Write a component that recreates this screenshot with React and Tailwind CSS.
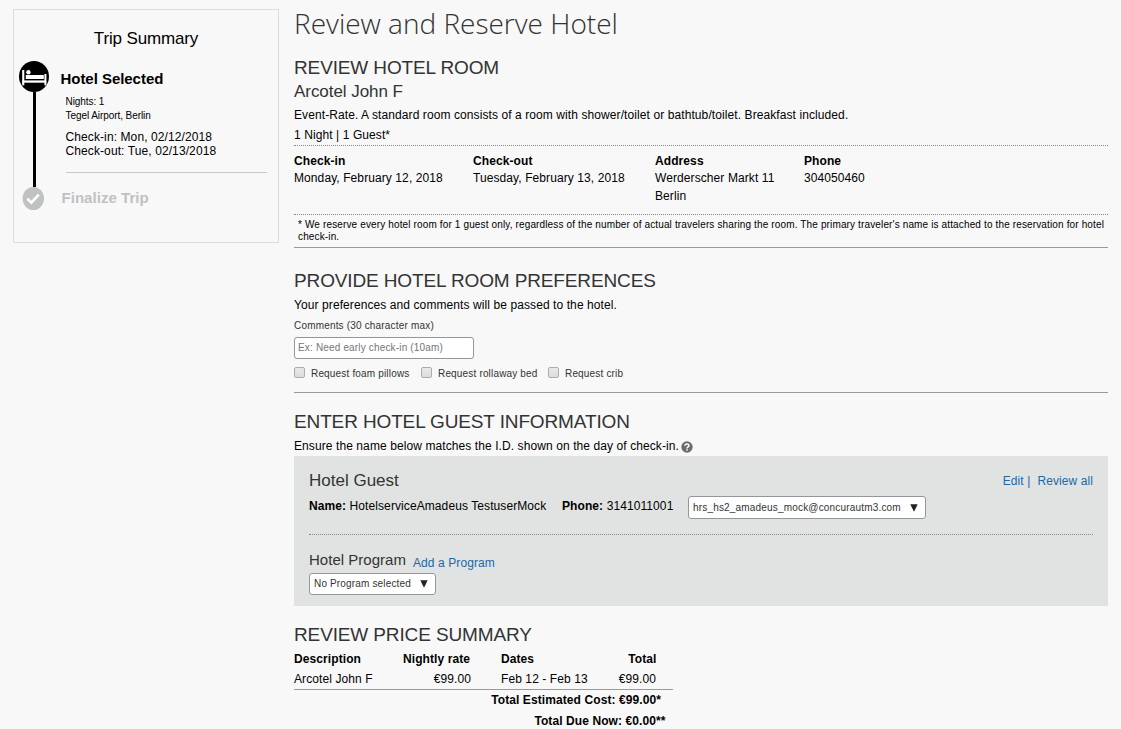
const h2 = "h-6 whitespace-nowrap text-[19px] leading-6 tracking-[-0.13px] text-[#333]";
const line = "h-[18px] whitespace-nowrap leading-[18px]";

function Select({ className, children }) {
  return (
    <div className={"flex items-center justify-between rounded-[3px] border border-[#94969b] bg-white pl-1 pr-[7px] " + className}>
      <span className="whitespace-nowrap text-[10px] leading-5 text-[#333]">{children}</span>
      <svg width="8" height="8" viewBox="0 0 8 8">
        <path d="M0.3 0.3h7.4L4 7.8z" fill="#222" />
      </svg>
    </div>
  );
}

function Check({ className = "", children }) {
  return (
    <label className={"flex items-start whitespace-nowrap text-[10px] leading-[14px] text-[#333] " + className}>
      <span className="size-[11px] shrink-0 rounded-[2px] border border-[#adadad] bg-linear-to-b from-[#e9e9e9] to-[#dcdcdc]" />
      <span className="pl-1.5">{children}</span>
    </label>
  );
}

function Field({ label, className, children }) {
  return (
    <div className={"shrink-0 " + className}>
      <div className="h-[17px] whitespace-nowrap font-bold leading-[18px]">{label}</div>
      <div className="whitespace-nowrap leading-[18px]">{children}</div>
    </div>
  );
}

function BedIcon() {
  return (
    <svg className="block shrink-0" width="30" height="31" viewBox="0 0 30 31">
      <ellipse cx="15" cy="15.5" rx="15" ry="15.5" fill="#000" />
      <g fill="#fff">
        <rect x="3.2" y="9" width="2.1" height="15.3" />
        <rect x="25.4" y="13" width="2" height="11.3" />
        <rect x="3.2" y="19.4" width="24" height="2.3" />
        <rect x="6.8" y="14" width="18" height="4" />
        <circle cx="9.4" cy="11.3" r="2.2" />
      </g>
    </svg>
  );
}

function TripSummary() {
  return (
    <aside className="ml-[13px] mt-[9px] h-[234px] w-[266px] shrink-0 border border-[#dcdcdc]">
      <div className="mt-[19px] text-center text-[17px] leading-[20px] tracking-[-0.15px]">Trip Summary</div>
      <div className="mt-[12px] flex">
        <div className="ml-[5px] flex w-[30px] shrink-0 flex-col items-center">
          <BedIcon />
          <div className="ml-px h-[95px] w-[3px] bg-black" />
          <svg className="mr-[2px] block" width="22" height="23" viewBox="0 0 22 23">
            <ellipse cx="11.3" cy="11.5" rx="10.7" ry="11.5" fill="#c0c1c2" />
            <path d="M5.4 11.8l4 3.9 7.4-8" fill="none" stroke="#fff" strokeWidth="2.6" />
          </svg>
        </div>
        <div className="ml-[11.5px]">
          <div className="mt-[8px] h-[20px] whitespace-nowrap text-[15px] font-bold leading-[20px] tracking-[-0.04px]">Hotel Selected</div>
          <div className="ml-[5px] mt-[6px] text-[10px] leading-[14px] tracking-[-0.07px]">
            <div>Nights: 1</div>
            <div>Tegel Airport, Berlin</div>
          </div>
          <div className="ml-[5px] mt-[7px] text-[12px] leading-[14px] tracking-[0.1px]">
            <div>Check-in: Mon, 02/12/2018</div>
            <div>Check-out: Tue, 02/13/2018</div>
          </div>
          <div className="ml-[5.5px] mt-[14px] h-px w-[201px] bg-[#c8c8c8]" />
          <div className="ml-px mt-[15px] text-[15px] font-bold leading-[20px] tracking-[0.04px] text-[#c0c1c2]">Finalize Trip</div>
        </div>
      </div>
    </aside>
  );
}

export default function App() {
  return (
    <div className="flex h-[729px] w-[1121px] overflow-hidden bg-[#f8f8f8] font-['Liberation_Sans',Arial,sans-serif] text-[12px] tracking-[0.09px] text-black">
      <TripSummary />
      <main className="ml-[15px] w-[814px] shrink-0">
        <h1 className="mt-[4px] h-[38px] whitespace-nowrap font-['Open_Sans',sans-serif] text-[28px] font-light leading-[38px] tracking-normal text-[#333]">
          Review and Reserve Hotel
        </h1>

        <section className="mt-[14px]">
          <h2 className={h2}>REVIEW HOTEL ROOM</h2>
          <div className="mt-[2px] h-[20px] text-[17px] leading-[20px] tracking-[-0.05px] text-[#333]">Arcotel John F</div>
          <div className={"mt-[4px] " + line}>
            Event-Rate. A standard room consists of a room with shower/toilet or bathtub/toilet. Breakfast included.
          </div>
          <div className={"mt-[2px] " + line}>1 Night | 1 Guest*</div>
          <div className="mt-px flex h-[70px] border-y border-dotted border-[#888] pt-[6px]">
            <Field label="Check-in" className="w-[179px]">Monday, February 12, 2018</Field>
            <Field label="Check-out" className="w-[182px]">Tuesday, February 13, 2018</Field>
            <Field label="Address" className="w-[149px]">Werderscher Markt 11<br />Berlin</Field>
            <Field label="Phone" className="w-[80px]">304050460</Field>
          </div>
          <div className="h-[33px] border-b border-[#999] pl-1 pt-[4px] text-[10px] leading-[12px] tracking-[0.139px]">
            <div className="whitespace-nowrap">
              * We reserve every hotel room for 1 guest only, regardless of the number of actual travelers sharing the room. The primary traveler's name is attached to the reservation for hotel
            </div>
            <div>check-in.</div>
          </div>
        </section>

        <section className="mt-[21px]">
          <h2 className={h2}>PROVIDE HOTEL ROOM PREFERENCES</h2>
          <div className={"mt-[3px] " + line}>Your preferences and comments will be passed to the hotel.</div>
          <div className="mt-[5px] h-[14px] text-[10px] leading-[14px] tracking-[0.18px] text-[#333]">Comments (30 character max)</div>
          <input
            className="mt-[4px] block h-[22px] w-[180px] rounded-[3px] border border-[#94969b] bg-white px-[3px] pb-px text-[10px] tracking-[0.165px] placeholder:text-[#757575]"
            placeholder="Ex: Need early check-in (10am)"
          />
          <div className="mt-[8px] flex h-[26px] border-b border-[#999] tracking-[0.17px]">
            <Check className="w-[127px]">Request foam pillows</Check>
            <Check className="w-[127px]">Request rollaway bed</Check>
            <Check>Request crib</Check>
          </div>
        </section>

        <section className="mt-[17px]">
          <h2 className={h2}>ENTER HOTEL GUEST INFORMATION</h2>
          <div className={"mt-[3px] flex items-center " + line}>
            Ensure the name below matches the I.D. shown on the day of check-in.
            <svg className="ml-[2px] mt-px" width="12" height="12" viewBox="0 0 12 12">
              <circle cx="6" cy="6" r="5.7" fill="#6c6c6c" />
              <path d="M4 4.8C4 2.4 8 2.4 8 4.6 8 5.9 6.1 5.9 6.1 7.4" fill="none" stroke="#fff" strokeWidth="1.5" />
              <rect x="5.3" y="8.2" width="1.5" height="1.5" fill="#fff" />
            </svg>
          </div>
          <div className="mt-px flow-root h-[150px] bg-[#e1e3e2] px-[15px]">
            <div className="mt-[15px] flex h-[20px] items-center justify-between">
              <div className="text-[17px] leading-[20px] tracking-normal text-[#333]">Hotel Guest</div>
              <div className="flex gap-[7px] text-[#2068a8]">
                <span>Edit |</span>
                <span>Review all</span>
              </div>
            </div>
            <div className="mt-[5px] flex h-[23px]">
              <div className="mt-px w-[253px] leading-[18px]"><b>Name:</b> HotelserviceAmadeus TestuserMock</div>
              <div className="mt-px w-[126px] leading-[18px]"><b>Phone:</b> 3141011001</div>
              <Select className="h-[23px] w-[238px] tracking-[0.18px]">hrs_hs2_amadeus_mock@concurautm3.com</Select>
            </div>
            <div className="mt-[15px] border-t border-dotted border-[#888]" />
            <div className="mt-[15px] flex h-[20px] items-baseline leading-[20px]">
              <span className="w-[104px] text-[15px] tracking-[0.02px] text-[#333]">Hotel Program</span>
              <span className="translate-y-[2px] text-[#2068a8]">Add a Program</span>
            </div>
            <Select className="mt-[3px] h-[22px] w-[127px] tracking-[0.16px]">No Program selected</Select>
          </div>
        </section>

        <section className="mt-[17px] w-[379px] whitespace-nowrap leading-[18px]">
          <h2 className={h2}>REVIEW PRICE SUMMARY</h2>
          <div className="mt-[3px] flex h-[18px] font-bold">
            <span className="w-[109px]">Description</span>
            <span className="w-[98px]">Nightly rate</span>
            <span className="w-[87px]">Dates</span>
            <span className="w-[68.5px] text-right">Total</span>
          </div>
          <div className="mt-[2px] flex h-[20px] border-b border-[#999]">
            <span className="w-[109px]">Arcotel John F</span>
            <span className="w-[68px] text-right">€99.00</span>
            <span className="ml-[30px] w-[87px]">Feb 12 - Feb 13</span>
            <span className="w-[68px] text-right">€99.00</span>
          </div>
          <div className="mt-px pr-[12px] text-right font-bold">Total Estimated Cost: €99.00*</div>
          <div className="mt-[3px] pr-[7.5px] text-right font-bold">Total Due Now: €0.00**</div>
        </section>
      </main>
    </div>
  );
}
